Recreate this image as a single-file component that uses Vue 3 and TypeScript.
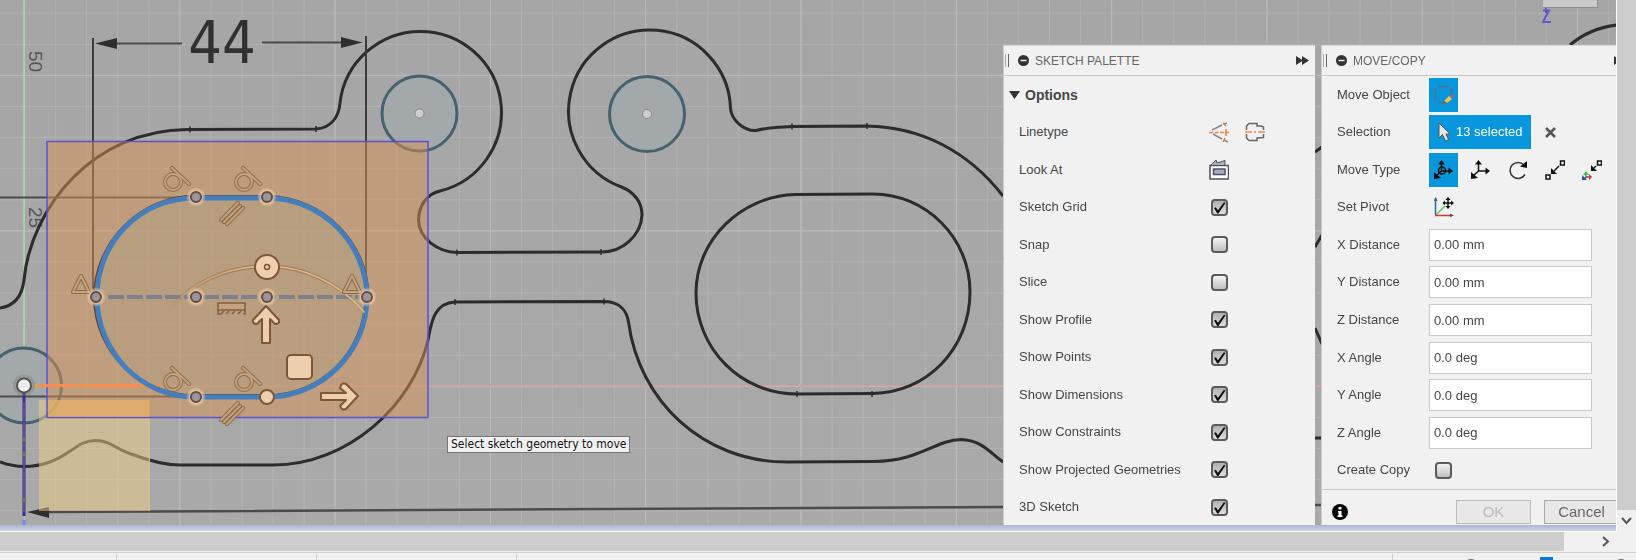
<script setup lang="ts">
import { reactive, ref } from 'vue'

interface Toggle { id: string; label: string; on: boolean }
interface Field { id: string; label: string; value: string }

const toggles = reactive<Toggle[]>([
  { id: 'grid', label: 'Sketch Grid', on: true },
  { id: 'snap', label: 'Snap', on: false },
  { id: 'slice', label: 'Slice', on: false },
  { id: 'profile', label: 'Show Profile', on: true },
  { id: 'points', label: 'Show Points', on: true },
  { id: 'dimensions', label: 'Show Dimensions', on: true },
  { id: 'constraints', label: 'Show Constraints', on: true },
  { id: 'projected', label: 'Show Projected Geometries', on: true },
  { id: 'sketch3d', label: '3D Sketch', on: true },
])

const fields = reactive<Field[]>([
  { id: 'xd', label: 'X Distance', value: '0.00 mm' },
  { id: 'yd', label: 'Y Distance', value: '0.00 mm' },
  { id: 'zd', label: 'Z Distance', value: '0.00 mm' },
  { id: 'xa', label: 'X Angle', value: '0.0 deg' },
  { id: 'ya', label: 'Y Angle', value: '0.0 deg' },
  { id: 'za', label: 'Z Angle', value: '0.0 deg' },
])

const createCopy = ref(false)
const zoom = ref(50)
const tangents = [[173, 182], [244, 182], [173, 382], [244, 382]]
const parallels = [[231, 213], [231, 413]]
const corners = [[81, 284], [352, 284]]
const points = [[196, 197], [267, 197], [96, 297], [196, 297], [267, 297], [367, 297], [196, 397]]
</script>

<template>
  <div class="app">
    <div class="workspace">
      <main class="viewport">
        <svg class="canvas" aria-label="Sketch canvas">
          <defs>
            <pattern id="minor" x="24" y="74.9" width="31.06" height="31.1" patternUnits="userSpaceOnUse">
              <path d="M0.5 0V32M0 0.5H32" stroke="#b4b4b4" stroke-width="1" />
            </pattern>
            <pattern id="major" x="24" y="74.9" width="155.3" height="155.5" patternUnits="userSpaceOnUse">
              <path d="M0.5 0V156M0 0.5H156" stroke="#bdbdbd" stroke-width="1" />
            </pattern>
            <linearGradient id="arcFade" x1="0" x2="1">
              <stop offset="0" stop-color="#a5805a" stop-opacity="0" />
              <stop offset=".3" stop-color="#a5805a" />
              <stop offset=".8" stop-color="#a5805a" />
              <stop offset="1" stop-color="#a5805a" stop-opacity=".2" />
            </linearGradient>
            <linearGradient id="arcCore" x1="0" x2="1">
              <stop offset="0" stop-color="#dcb893" stop-opacity="0" />
              <stop offset=".4" stop-color="#dcb893" />
              <stop offset="1" stop-color="#dcb893" />
            </linearGradient>
            <radialGradient id="halo">
              <stop offset=".5" stop-color="#f3d2b0" />
              <stop offset="1" stop-color="#f3d2b0" stop-opacity="0" />
            </radialGradient>
            <linearGradient id="top" x1="0" x2="0" y1="0" y2="1">
              <stop offset="0" stop-color="#000" stop-opacity=".02" />
              <stop offset="1" stop-color="#000" stop-opacity="0" />
            </linearGradient>
            <g id="tangent">
              <circle r="8" /><path d="M-1 -14 L16 2" />
            </g>
            <g id="parallel">
              <path d="M-10 7 L7 -10M-7 9 L9 -7M-4 11 L12 -5" />
            </g>
          </defs>
          <rect width="100%" height="100%" fill="#a9a9a9" />
          <rect width="100%" height="100%" fill="url(#minor)" />
          <rect width="100%" height="100%" fill="url(#major)" />
          <rect width="100%" height="100%" fill="url(#top)" />

          <path d="M0 385.5H1616" stroke="#cfa09c" stroke-width="1.5" />
          <path d="M24 0V385" stroke="#a5d8a3" stroke-width="1.5" />

          <g class="ruler">
            <text transform="translate(29 51) rotate(90)">50</text>
            <text transform="translate(29 207) rotate(90)">25</text>
          </g>

          <g fill="#a3a9aa" stroke="#45626f" stroke-width="3">
            <circle cx="24" cy="385.5" r="37.5" />
            <circle cx="419.500" cy="113.500" r="37.500" />
            <circle cx="647" cy="114" r="37.500" />
          </g>

          <g class="outline">
            <path d="M0 308C14 306 22 297 24 280C31 207 94 130 187 129.500L316 129C331 128 339 117 340 103A81 81 0 1 1 440 191C427 194 419 205 418.500 220C419 239 438 252 457 252.500L602 252C622 252 641 236 642 215C642 202 634 192 621.500 187A81 81 0 1 1 730.500 108C731 119 743 131 756 130.500C766 128 777 127 792 126.500L867 126C921 127 968 151 1003 196" />
            <path d="M0 462Q24 471 50 462C72 454 77 441 95 440.500C109 440 116 449 131 454Q160 465 180 465H273C348 465 413 405 428 340C431 325 433 303 455 302L605 301.500C621 302 627 312 628.500 322C639 401 703 462 787 462L874 461.500C920 461 935 440 961 439.500C982 440 990 453 1003 462" />
            <path d="M795 194.500L873 194C926 194 970 238 970 292C970 349 926 393 873 393.500L797 394C740 394 696 348 696 293C696 240 741 196 795 194.500Z" />
            <path d="M1570 45Q1590 28 1617 25M1315 152L1322 147M1315 247L1322 235M1315 328L1322 344M1315 438H1322" />
            <path d="M190 126.500V132.500M316 126V132M792 123.500V129.500M867 123V129M457 249.500V255.500M601 249V255M455 299V305M604 298.500V304.500M797 391V397M872 391V397" stroke-width="1.500" />
          </g>

          <g stroke="#4b4b4b" stroke-width="2" fill="none">
            <path d="M93 38V297M366 36V297" stroke="#3c3c3c" />
            <path d="M0 197.500H190M0 396.500H195" />
            <path d="M112 43.500H182M262 42.500H345" />
            <path d="M45 512L1003 507L1322 505" stroke-width="2.500" />
          </g>
          <g fill="#2e2e2e">
            <path d="M95 43.500L117 38V49Z" /><path d="M362.500 42.500L341 37V48Z" />
            <path d="M27 512L49 507V518Z" />
          </g>
          <text class="dimension" x="222" y="63" text-anchor="middle">44</text>

          <rect x="39" y="400" width="110.500" height="111" fill="#edcd83" fill-opacity=".5" />
          <path d="M149.500 400V511" stroke="#d9bb8b" stroke-width="1" />
          <rect x="47" y="141.500" width="381" height="276" fill="#d89250" fill-opacity=".5" stroke="#5b50d4" stroke-width="1.500" />
          <path d="M48 400H149V417H48Z" fill="#edb564" fill-opacity=".45" />
          <path d="M35 385.500H160" stroke="#fb8b4e" stroke-width="3" />
          <path d="M35 385.500H40M76 385.500H80M88 385.500H92M142 385.500H146" stroke="#e59b40" stroke-width="3" />

          <path d="M195 197H267C322 198 366 243 367 297C367 352 322 397 267 397H195C141 397 96 352 96 297C96 242 140 198 195 197Z" fill="#a9a386" fill-opacity=".32" stroke="none" />
          <path d="M195 196.500H267C323 197 368 243 368 297M195 196C140 197 95 242 94.500 297C95 352 140 396 195 395.500H266C322 396 365 352 366 297" fill="none" stroke="#66462a" stroke-width="3" />
          <path d="M195 198H267C322 198 366 243 367 297C367 352 322 397 267 397H195C141 397 97 352 97 297C97 242 140 198 195 198Z" fill="none" stroke="#457ebd" stroke-width="5" />
          <path d="M108 297H360" stroke="#7d8091" stroke-width="4" stroke-dasharray="16 3" />

          <g fill="none" stroke-linecap="round" stroke-linejoin="round">
            <path d="M162 317C215 249 313 251 364 312" stroke="url(#arcFade)" stroke-width="4" />
            <path d="M162 317C215 249 313 251 364 312" stroke="url(#arcCore)" stroke-width="1.500" />
          </g>

          <g v-for="(style, i) in ['glyph-edge', 'glyph-core']" :key="i" :class="style">
            <use v-for="(p, k) in tangents" :key="'t' + k" href="#tangent" :x="p[0]" :y="p[1]" />
            <use v-for="(p, k) in parallels" :key="'p' + k" href="#parallel" :x="p[0]" :y="p[1]" />
            <path v-for="(p, k) in corners" :key="'c' + k" :d="`M${p[0]} ${p[1] - 8}L${p[0] - 8} ${p[1] + 8}H${p[0] + 8}Z`" />
          </g>
          <g fill="#c6a37f" stroke="#80613f" stroke-width="1.500">
            <rect x="218" y="303" width="27" height="7" />
            <path d="M218 310V314H221L224 311M226 314L229 311M232 314L235 311M238 314L241 311M243 314H245V310" fill="none" />
          </g>

          <g v-for="(p, k) in points" :key="k">
            <circle :cx="p[0]" :cy="p[1]" r="10" fill="url(#halo)" />
            <circle :cx="p[0]" :cy="p[1]" r="5" fill="#9994a0" stroke="#684c3b" stroke-width="2" />
          </g>

          <g fill="#edcfae" stroke="#7d5735" stroke-width="2" stroke-linejoin="round">
            <circle cx="267" cy="397" r="7" />
            <circle cx="267" cy="267" r="12" />
            <circle cx="267" cy="267" r="2.500" stroke-width="1.500" />
            <path d="M266 306L279 320Q280 324 275 324L270 319V343H262V319L257 324Q252 324 253 320Z" />
            <rect x="287" y="355" width="25" height="24" rx="4" />
            <path d="M358 396L346 409Q342 411 340 406L346 400H321V393H346L340 388Q341 382 346 384Z" />
          </g>

          <path d="M24 392V516" stroke="#302f99" stroke-width="3" />
          <path d="M24 402V512" stroke="#8d6270" stroke-width="1" />
          <path d="M24 437V441M24 452V456M24 498V502" stroke="#817548" stroke-width="2" />
          <path d="M24 520V525" stroke="#8580f5" stroke-width="3" />
          <circle cx="24" cy="385.500" r="11" fill="#777" fill-opacity=".35" />
          <circle cx="24" cy="385.500" r="7" fill="#eee" stroke="#555" stroke-width="2" />
          <g fill="#cecece" stroke="#888" stroke-width="1">
            <circle cx="419.500" cy="113.500" r="4.500" /><circle cx="647" cy="114" r="4.500" />
          </g>

          <rect x="1543" y="0" width="55" height="8" fill="#8e8e8e" />
          <rect x="1543" y="0" width="54" height="7" fill="#c9c9c9" />
          <path d="M1543 10.500H1549L1543 22H1551M1546 8V13" fill="none" stroke="#5e59cf" stroke-width="2" />
        </svg>

        <div class="hint" role="tooltip">Select sketch geometry to move</div>

        <div class="panels">
          <section class="panel">
            <header>
              <span class="grip"></span>
              <button class="bare" aria-label="Collapse sketch palette">
                <svg width="11" height="11"><circle cx="5.500" cy="5.500" r="5.500" fill="#333" /><path d="M2.500 5.500H8.500" stroke="#eee" stroke-width="1.500" /></svg>
              </button>
              <h2>SKETCH PALETTE</h2>
              <button class="bare" aria-label="Dock sketch palette">
                <svg width="13" height="9"><path d="M0 0L7 4.500L0 9ZM6 0L13 4.500L6 9Z" fill="#333" /></svg>
              </button>
            </header>
            <div class="rows palette-rows">
              <button class="bare section">
                <svg width="11" height="8"><path d="M0 0H11L5.500 8Z" fill="#333" /></svg>Options
              </button>
              <div class="row">
                <span>Linetype</span>
                <div class="icons">
                  <button class="bare" aria-label="Construction">
                    <svg width="20" height="21" fill="none">
                      <path d="M3 8L13 3M15 2L18 1M4 12L13 17M15 18L19 20" stroke="#888" stroke-width="1.500" />
                      <path d="M0 10.500H20" stroke="#ed8b4c" stroke-width="1.500" stroke-dasharray="4 1.500" />
                      <path d="M17 7V14M14 1L17 4M14 20L16 16" stroke="#ed7b35" stroke-width="1.500" />
                    </svg>
                  </button>
                  <button class="bare" aria-label="Centerline">
                    <svg width="20" height="20" fill="none">
                      <path d="M1.500 8V4L4 1.500H12V4H16L18.500 5V8M1.500 12V16L4 18.500H12V16L18.500 15.500V12" stroke="#666" stroke-width="1.500" />
                      <path d="M0 10H7M9 10H11M13 10H20" stroke="#ed8b4c" stroke-width="1.500" />
                    </svg>
                  </button>
                </div>
              </div>
              <div class="row">
                <span>Look At</span>
                <div class="icons">
                  <button class="bare" aria-label="Look at">
                    <svg width="20" height="21">
                      <path d="M1 6.500H19.500V20H1Z" fill="#fff" stroke="#4c515d" stroke-width="1.500" />
                      <path d="M4.500 10H16V15.500H4.500Z" fill="#a7adbd" stroke="#4c515d" stroke-width="1.500" />
                      <path d="M2 6L7 1L8 4L16 1.500V6" fill="#aeb3bf" stroke="#4c515d" />
                    </svg>
                  </button>
                </div>
              </div>
              <div v-for="t in toggles" :key="t.id" class="row">
                <label :for="t.id">{{ t.label }}</label>
                <input :id="t.id" v-model="t.on" class="tick" type="checkbox">
              </div>
            </div>
          </section>

          <section class="panel">
            <header>
              <span class="grip"></span>
              <button class="bare" aria-label="Collapse move panel">
                <svg width="11" height="11"><circle cx="5.500" cy="5.500" r="5.500" fill="#333" /><path d="M2.500 5.500H8.500" stroke="#eee" stroke-width="1.500" /></svg>
              </button>
              <h2>MOVE/COPY</h2>
              <button class="bare" aria-label="Dock move panel">
                <svg width="13" height="9"><path d="M0 0L7 4.500L0 9ZM6 0L13 4.500L6 9Z" fill="#333" /></svg>
              </button>
            </header>
            <div class="rows move-rows">
              <div class="row">
                <span>Move Object</span>
                <button class="tool active" aria-label="Sketch objects">
                  <svg width="20" height="20" fill="none">
                    <path d="M4 1.500H15M1.500 4V15M17.500 4V10M4 17.500H11" stroke="#5b6f80" stroke-width="1.500" />
                    <path d="M0 0H3V3H0ZM16 0H19V3H16ZM0 16H3V19H0Z" fill="#168ff0" />
                    <path d="M10 16L15 11L18 14L13 18Z" fill="#f0c34b" /><path d="M16 11L18 9.500L20 11L18 13Z" fill="#df5260" /><path d="M10 16L13 18L9 20Z" fill="#666" />
                  </svg>
                </button>
              </div>
              <div class="row">
                <span>Selection</span>
                <div class="pick">
                  <button class="chosen">
                    <svg width="13" height="20"><path d="M1 1V16L4.500 12.500L7.500 19L10.500 17.500L8 12H12Z" fill="#e6e6e6" stroke="#555" /></svg>
                    13 selected
                  </button>
                  <button class="bare" aria-label="Clear selection">
                    <svg width="11" height="11"><path d="M1 1L10 10M10 1L1 10" stroke="#555" stroke-width="2.500" /></svg>
                  </button>
                </div>
              </div>
              <div class="row">
                <span>Move Type</span>
                <div class="types">
                  <button class="tool active" aria-label="Free move">
                    <svg width="20" height="20"><g stroke="#111" stroke-width="1.500" fill="none"><path d="M7.500 3V11H16M7.500 11L2 16" /><circle cx="8" cy="10.500" r="3.500" /></g><path d="M7.500 0L11 4.500H4ZM19 11L14.500 7.500V14.500ZM0 19V12L7 18Z" fill="#111" /></svg>
                  </button>
                  <button class="tool" aria-label="Translate">
                    <svg width="20" height="20"><path d="M7.500 3V11H16M7.500 11L2 16" stroke="#111" stroke-width="1.500" fill="none" /><path d="M7.500 0L11 4.500H4ZM19 11L14.500 7.500V14.500ZM0 19V12L7 18Z" fill="#111" /></svg>
                  </button>
                  <button class="tool" aria-label="Rotate">
                    <svg width="20" height="20"><path d="M16 5A8 8 0 1 0 17 14.500" stroke="#333" stroke-width="1.500" fill="none" /><path d="M19 1V8L12 6.500Z" fill="#111" /></svg>
                  </button>
                  <button class="tool" aria-label="Point to point">
                    <svg width="20" height="20"><g fill="none" stroke="#111" stroke-width="1.500"><rect x="1" y="15" width="4" height="4" /><rect x="15.500" y="1" width="4" height="4" /><path d="M14 6L9 11" /></g><path d="M6 14V8L12 14Z" fill="#111" /></svg>
                  </button>
                  <button class="tool" aria-label="Point to position">
                    <svg width="20" height="20"><g fill="none" stroke-width="1.500"><rect x="15.500" y="1" width="4" height="4" stroke="#111" /><path d="M14 6L12 8" stroke="#111" /><path d="M4 13V17" stroke="#3cc848" /><path d="M4 17H8" stroke="#d92d37" /><path d="M4 17L1 20" stroke="#1d5eaa" /></g><path d="M9 11V5L15 11Z" fill="#111" /><path d="M4 11L7 15H1Z" fill="#3cc848" /><path d="M7 14L10 17L7 20Z" fill="#d92d37" /><path d="M0 15V20H5Z" fill="#1d5eaa" /></svg>
                  </button>
                </div>
              </div>
              <div class="row">
                <span>Set Pivot</span>
                <button class="tool" aria-label="Set pivot">
                  <svg width="20" height="20"><g fill="none" stroke-width="1.500"><path d="M1.500 1V18" stroke="#2368b4" /><path d="M2 18L11 9" stroke="#5cc84a" /><path d="M1 18.500H18" stroke="#d7353c" /><path d="M14 1V11M9 6H19" stroke="#111" /></g><path d="M1.500 0L3.500 4H0ZM20 18.500L16 16.500V20Z" fill="#555" /><path d="M14 0L16.500 3H11.500ZM14 12L16.500 9H11.500ZM8.500 6L11 3.500V8.500ZM20 6L17 3.500V8.500Z" fill="#111" /></svg>
                </button>
              </div>
              <div v-for="f in fields" :key="f.id" class="row">
                <label :for="f.id">{{ f.label }}</label>
                <input :id="f.id" v-model="f.value" class="value" type="text">
              </div>
              <div class="row">
                <label for="copy">Create Copy</label>
                <input id="copy" v-model="createCopy" class="tick inset" type="checkbox">
              </div>
            </div>
            <footer>
              <button class="bare" aria-label="Information">
                <svg width="16" height="16"><circle cx="8" cy="8" r="8" fill="#050505" /><path d="M6.500 3H9.500V5.500H6.500ZM6 7H9.500V11.500H10.500V13H5.500V11.500H6.500V8.500H6Z" fill="#fff" /></svg>
              </button>
              <button class="action" disabled>OK</button>
              <button class="action">Cancel</button>
            </footer>
          </section>
        </div>
      </main>
      <div class="vscroll">
        <div class="vthumb"></div>
        <button class="bare" aria-label="Scroll down">
          <svg width="11" height="8"><path d="M1 1L5.500 6L10 1" fill="none" stroke="#555" stroke-width="2" /></svg>
        </button>
      </div>
    </div>
    <div class="hscroll">
      <div class="hthumb"></div>
      <button class="bare" aria-label="Scroll right">
        <svg width="8" height="11"><path d="M1 1L6 5.500L1 10" fill="none" stroke="#555" stroke-width="2" /></svg>
      </button>
    </div>
    <footer class="status">
      <span class="cell first"></span><span class="cell"></span><span class="cell"></span><span class="cell rest"></span>
      <div class="zoombar">
        <button class="round" aria-label="Zoom out"></button>
        <input v-model="zoom" type="range" min="0" max="100" aria-label="Zoom">
        <button class="round" aria-label="Zoom in"></button>
      </div>
    </footer>
  </div>
</template>

<style>
body { margin: 0; overflow: hidden; }
</style>

<style scoped>
.app {
  display: flex; flex-direction: column; height: 100vh;
  font: 13px/18px "Liberation Sans", Arial, sans-serif; color: #464646; background: #f0f0f0;
}
* { box-sizing: border-box; }
button, input { font: inherit; color: inherit; margin: 0; }
svg { display: block; flex: none; }
.bare { border: 0; padding: 0; background: none; }
.workspace { flex: 1; display: flex; min-height: 0; }
.viewport {
  position: relative; flex: 1; overflow: hidden;
  border-right: 1px solid #fff;
}
.viewport::after {
  content: ""; position: absolute; inset: auto 0 0 0; height: 7px;
  background: linear-gradient(#aab6cb, #c8d4e5 80%, #fff 90%);
}
.canvas { position: absolute; inset: 0; width: 100%; height: 100%; }
.outline { fill: none; stroke: #2c2c2c; stroke-width: 3; }
.ruler { font-size: 19px; fill: #555; }
.dimension { font-family: "DejaVu Sans Condensed", "DejaVu Sans", sans-serif; font-stretch: condensed; font-size: 59px; fill: #303030; }
.glyph-edge, .glyph-core { fill: none; stroke-linejoin: round; stroke-linecap: round; }
.glyph-edge { stroke: #80613f; stroke-width: 4; opacity: .8; }
.glyph-core { stroke: #c6a37f; stroke-width: 2; }

.hint {
  position: absolute; left: 447px; top: 436px; padding: 0 3px;
  border: 1px solid #767676; background: #f1f1f1; color: #111;
  font: 12px/15px "DejaVu Sans Condensed", "DejaVu Sans", sans-serif; font-stretch: condensed; white-space: nowrap;
}
.panels {
  position: absolute; top: 45px; bottom: 7px; right: -17px;
  display: flex; gap: 6px; overflow: hidden;
}
.panel { width: 312px; background: #f1f1f1; border-left: 1px solid #ccc; border-top: 1px solid #d8d8d8; }
header { display: flex; align-items: center; height: 30px; padding-right: 6px; border-bottom: 1px solid #c8c8c8; }
.grip { width: 4px; height: 13px; margin: 0 9px 0 1px; border-right: 1px solid #666; background: linear-gradient(90deg, #aaa 1px, transparent 1px); }
h2 { flex: 1; margin: 0 0 0 6px; font-size: 12px; font-weight: 400; color: #666; }
.rows { display: grid; }
.palette-rows { height: 450px; grid-template-rows: repeat(12, 1fr); }
.move-rows { height: 414px; grid-template-rows: repeat(11, 1fr); border-bottom: 1px solid #c8c8c8; }
.row { display: grid; align-items: center; justify-items: start; white-space: nowrap; }
.palette-rows .row { grid-template-columns: 206px 1fr; padding-left: 15px; }
.move-rows .row { grid-template-columns: 92px 1fr; padding-left: 15px; }
.section { display: flex; align-items: center; gap: 5px; padding-left: 5px; font-size: 14px; font-weight: 700; }
.palette-rows .tick { margin-left: -14px; }
.icons { display: flex; align-items: center; gap: 16px; margin-left: -16px; }
.tick {
  appearance: none; width: 17px; height: 17px; border: 2px solid #5b5b5b; border-radius: 4px;
  background: linear-gradient(#f3f3f3, #c0c0c0);
}
.tick:checked { background: linear-gradient(#b0b0b0, #dedede); }
.tick:checked::after {
  content: ""; display: block; width: 13px; height: 13px; background: #111;
  clip-path: polygon(8% 55%, 22% 50%, 38% 74%, 84% 12%, 96% 18%, 42% 98%, 32% 98%);
}
.inset { margin-left: 6px; }
.tool { display: flex; align-items: center; justify-content: center; width: 29px; height: 34px; padding: 0; border: 0; background: none; }
.active, .chosen { background: #0896dc; }
.types { display: flex; gap: 8px; }
.pick { display: flex; align-items: center; gap: 14px; }
.chosen { display: flex; align-items: center; gap: 5px; height: 34px; padding: 0 8px 0 9px; border: 0; color: #fff; }
.value { width: 163px; height: 32px; padding: 0 4px; border: 1px solid #c9c9c9; background: #fff; }
footer { display: flex; align-items: center; }
.panel footer { padding: 10px 14px 0 10px; gap: 13px; }
.panel footer .bare { margin-right: auto; }
.action { width: 75px; height: 24px; padding: 0; border: 1px solid #a9a9a9; background: #e8e8e8; font-size: 15px; color: #666; }
.action:disabled { color: #bbb; border-color: #bbb; }

.vscroll { display: flex; flex-direction: column; width: 19px; background: #f0f0f0; }
.vthumb { flex: 1; background: #cdcdcd; }
.vscroll .bare { display: flex; align-items: center; justify-content: center; height: 22px; }
.hscroll { display: flex; height: 19px; flex: none; }
.hthumb { flex: 1; background: #cdcdcd; }
.hscroll .bare { width: 72px; padding-left: 38px; }
.status { flex: none; height: 9px; align-items: flex-start; border-top: 1px solid #cfcfcf; margin-top: 1px; overflow: hidden; height: 8px; }
.cell { flex: none; width: 200px; height: 8px; margin-top: 1px; border-right: 1px solid #ccc; }
.first { width: 117px; }
.rest { flex: 1; }
.zoombar { display: flex; align-items: center; width: 243px; padding: 5px 7px 0 70px; }
.round { flex: none; width: 16px; height: 16px; padding: 0; border: 1px solid #666; border-radius: 50%; background: #f0f0f0; }
.zoombar input { appearance: none; flex: 1; min-width: 0; height: 18px; margin-top: -1px; background: none; }
.zoombar input::-webkit-slider-thumb { appearance: none; width: 13px; height: 18px; background: #0a78d7; }
</style>
